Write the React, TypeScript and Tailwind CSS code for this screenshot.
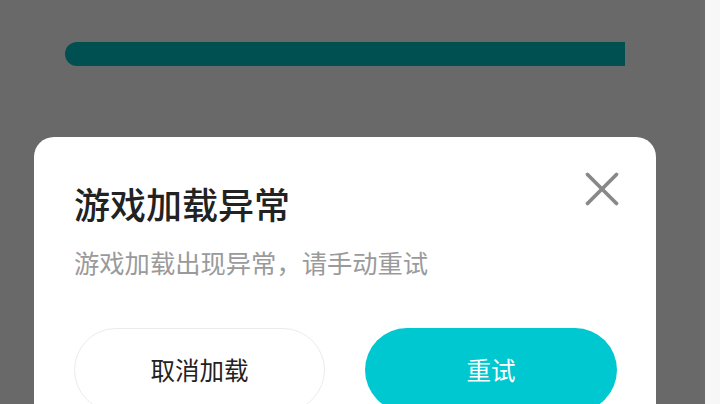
import { X } from 'lucide-react';

const font = { fontFamily: '"Noto Sans CJK SC", "Noto Sans", sans-serif' };

export default function App() {
  return (
    <div className="flex h-[404px] w-[720px] overflow-hidden" style={font}>
      <div className="flex w-[705px] flex-col bg-[#696969] pt-[42px]">
        <div className="ml-[65px] h-[24px] w-[560px] shrink-0 rounded-l-full rounded-r-[3px] bg-[#004f51]" />

        <div className="relative ml-[34px] mt-[71px] w-[622px] flex-1 rounded-t-[20px] bg-white px-10 pt-[46px]">
          <button className="absolute right-[25px] top-[23px] text-[#888]">
            <X size={58} strokeWidth={1.5} />
          </button>
          <h1 className="text-[36px] font-medium leading-[40px] text-[#222]">游戏加载异常</h1>
          <p className="mt-[24px] text-[25.3px] leading-[30px] text-[#9a9a9a]">游戏加载出现异常，请手动重试</p>
          <div className="mt-[51px] flex gap-[40px]">
            <button className="h-[84px] w-[251px] shrink-0 rounded-full border border-[#ececec] bg-white text-[24.5px] text-[#222]">
              取消加载
            </button>
            <button className="h-[84px] w-[252px] shrink-0 rounded-full bg-[#00c8d0] text-[24.5px] text-white">
              重试
            </button>
          </div>
        </div>
      </div>
      <div className="flex-1 bg-[#f7f7f7]" />
    </div>
  );
}
